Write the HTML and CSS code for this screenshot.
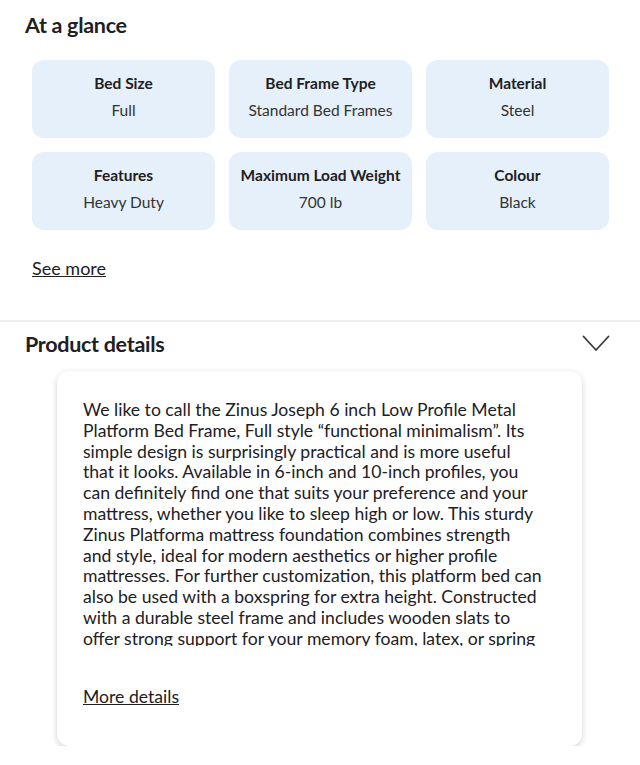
FILE: index.html
```html
<!DOCTYPE html>
<html lang="en">
<head>
    <meta charset="UTF-8">
    <meta name="viewport" content="width=device-width, initial-scale=1.0">
    <title>At a glance</title>
    <link rel="stylesheet" href="styles.css">
</head>
<body>
    <section class="glance">
        <h2 class="section-title">At a glance</h2>
        <div class="spec-grid">
            <div class="spec">
                <div class="spec-name">Bed Size</div>
                <div class="spec-value">Full</div>
            </div>
            <div class="spec">
                <div class="spec-name">Bed Frame Type</div>
                <div class="spec-value">Standard Bed Frames</div>
            </div>
            <div class="spec">
                <div class="spec-name">Material</div>
                <div class="spec-value">Steel</div>
            </div>
            <div class="spec">
                <div class="spec-name">Features</div>
                <div class="spec-value">Heavy Duty</div>
            </div>
            <div class="spec">
                <div class="spec-name">Maximum Load Weight</div>
                <div class="spec-value">700 lb</div>
            </div>
            <div class="spec">
                <div class="spec-name">Colour</div>
                <div class="spec-value">Black</div>
            </div>
        </div>
        <a href="#" class="see-more">See more</a>
    </section>

    <section class="details">
        <div class="details-head">
            <h2 class="section-title">Product details</h2>
            <svg class="chevron" width="28" height="18" viewBox="0 0 28 18">
                <path d="M1.5 1.5 L14 15 L26.5 1.5" fill="none" stroke="#3a3a3a" stroke-width="1.8" stroke-linecap="round" stroke-linejoin="round"/>
            </svg>
        </div>
        <div class="details-card">
            <p class="details-text">We like to call the Zinus Joseph 6 inch Low Profile Metal<br>
                Platform Bed Frame, Full style “functional minimalism”. Its<br>
                simple design is surprisingly practical and is more useful<br>
                that it looks. Available in 6-inch and 10-inch profiles, you<br>
                can definitely find one that suits your preference and your<br>
                mattress, whether you like to sleep high or low. This sturdy<br>
                Zinus Platforma mattress foundation combines strength<br>
                and style, ideal for modern aesthetics or higher profile<br>
                mattresses. For further customization, this platform bed can<br>
                also be used with a boxspring for extra height. Constructed<br>
                with a durable steel frame and includes wooden slats to<br>
                offer strong support for your memory foam, latex, or spring<br>
                mattress.</p>
            <a href="#" class="more-details">More details</a>
        </div>
    </section>
</body>
</html>
```

FILE: styles.css
```css
body {
    margin: 0;
    font-family: Lato, Arial, sans-serif;
    color: #21201f;
    background: #fff;
}
.section-title {
    margin: 0;
    font-size: 21.5px;
    font-weight: 700;
    line-height: 26px;
    letter-spacing: -0.3px;
}
.glance {
    padding: 12px 0 0 25px;
    height: 322px;
    border-bottom: 2px solid #eeeeee;
    box-sizing: border-box;
}
.spec-grid {
    display: grid;
    grid-template-columns: repeat(3, 183px);
    gap: 14px 14px;
    margin: 22px 0 0 7px;
}
.spec {
    height: 78px;
    background: #e6f0fa;
    border-radius: 12px;
    text-align: center;
    box-sizing: border-box;
    padding-top: 13px;
}
.spec-name {
    font-size: 15.5px;
    font-weight: 700;
    line-height: 20px;
}
.spec-value {
    font-size: 15.5px;
    line-height: 20px;
    margin-top: 7px;
    color: #333;
}
.see-more {
    display: inline-block;
    margin: 27px 0 0 7px;
    font-size: 18px;
    color: #21201f;
}
.details {
    padding: 9px 0 0 25px;
}
.details-head {
    display: flex;
    justify-content: space-between;
    align-items: center;
    padding-right: 30px;
}
.details-card {
    width: 525px;
    margin: 14px 0 0 32px;
    padding: 29px 8px 39px 26px;
    box-sizing: border-box;
    border-radius: 12px;
    background: #fff;
    box-shadow: 0 2px 6px rgba(0, 0, 0, 0.18);
}
.details-text {
    margin: 0;
    font-size: 17.6px;
    line-height: 20.8px;
    height: 246px;
    overflow: hidden;
    white-space: nowrap;
}
.more-details {
    display: inline-block;
    margin-top: 40px;
    font-size: 17.6px;
    color: #21201f;
}
```
